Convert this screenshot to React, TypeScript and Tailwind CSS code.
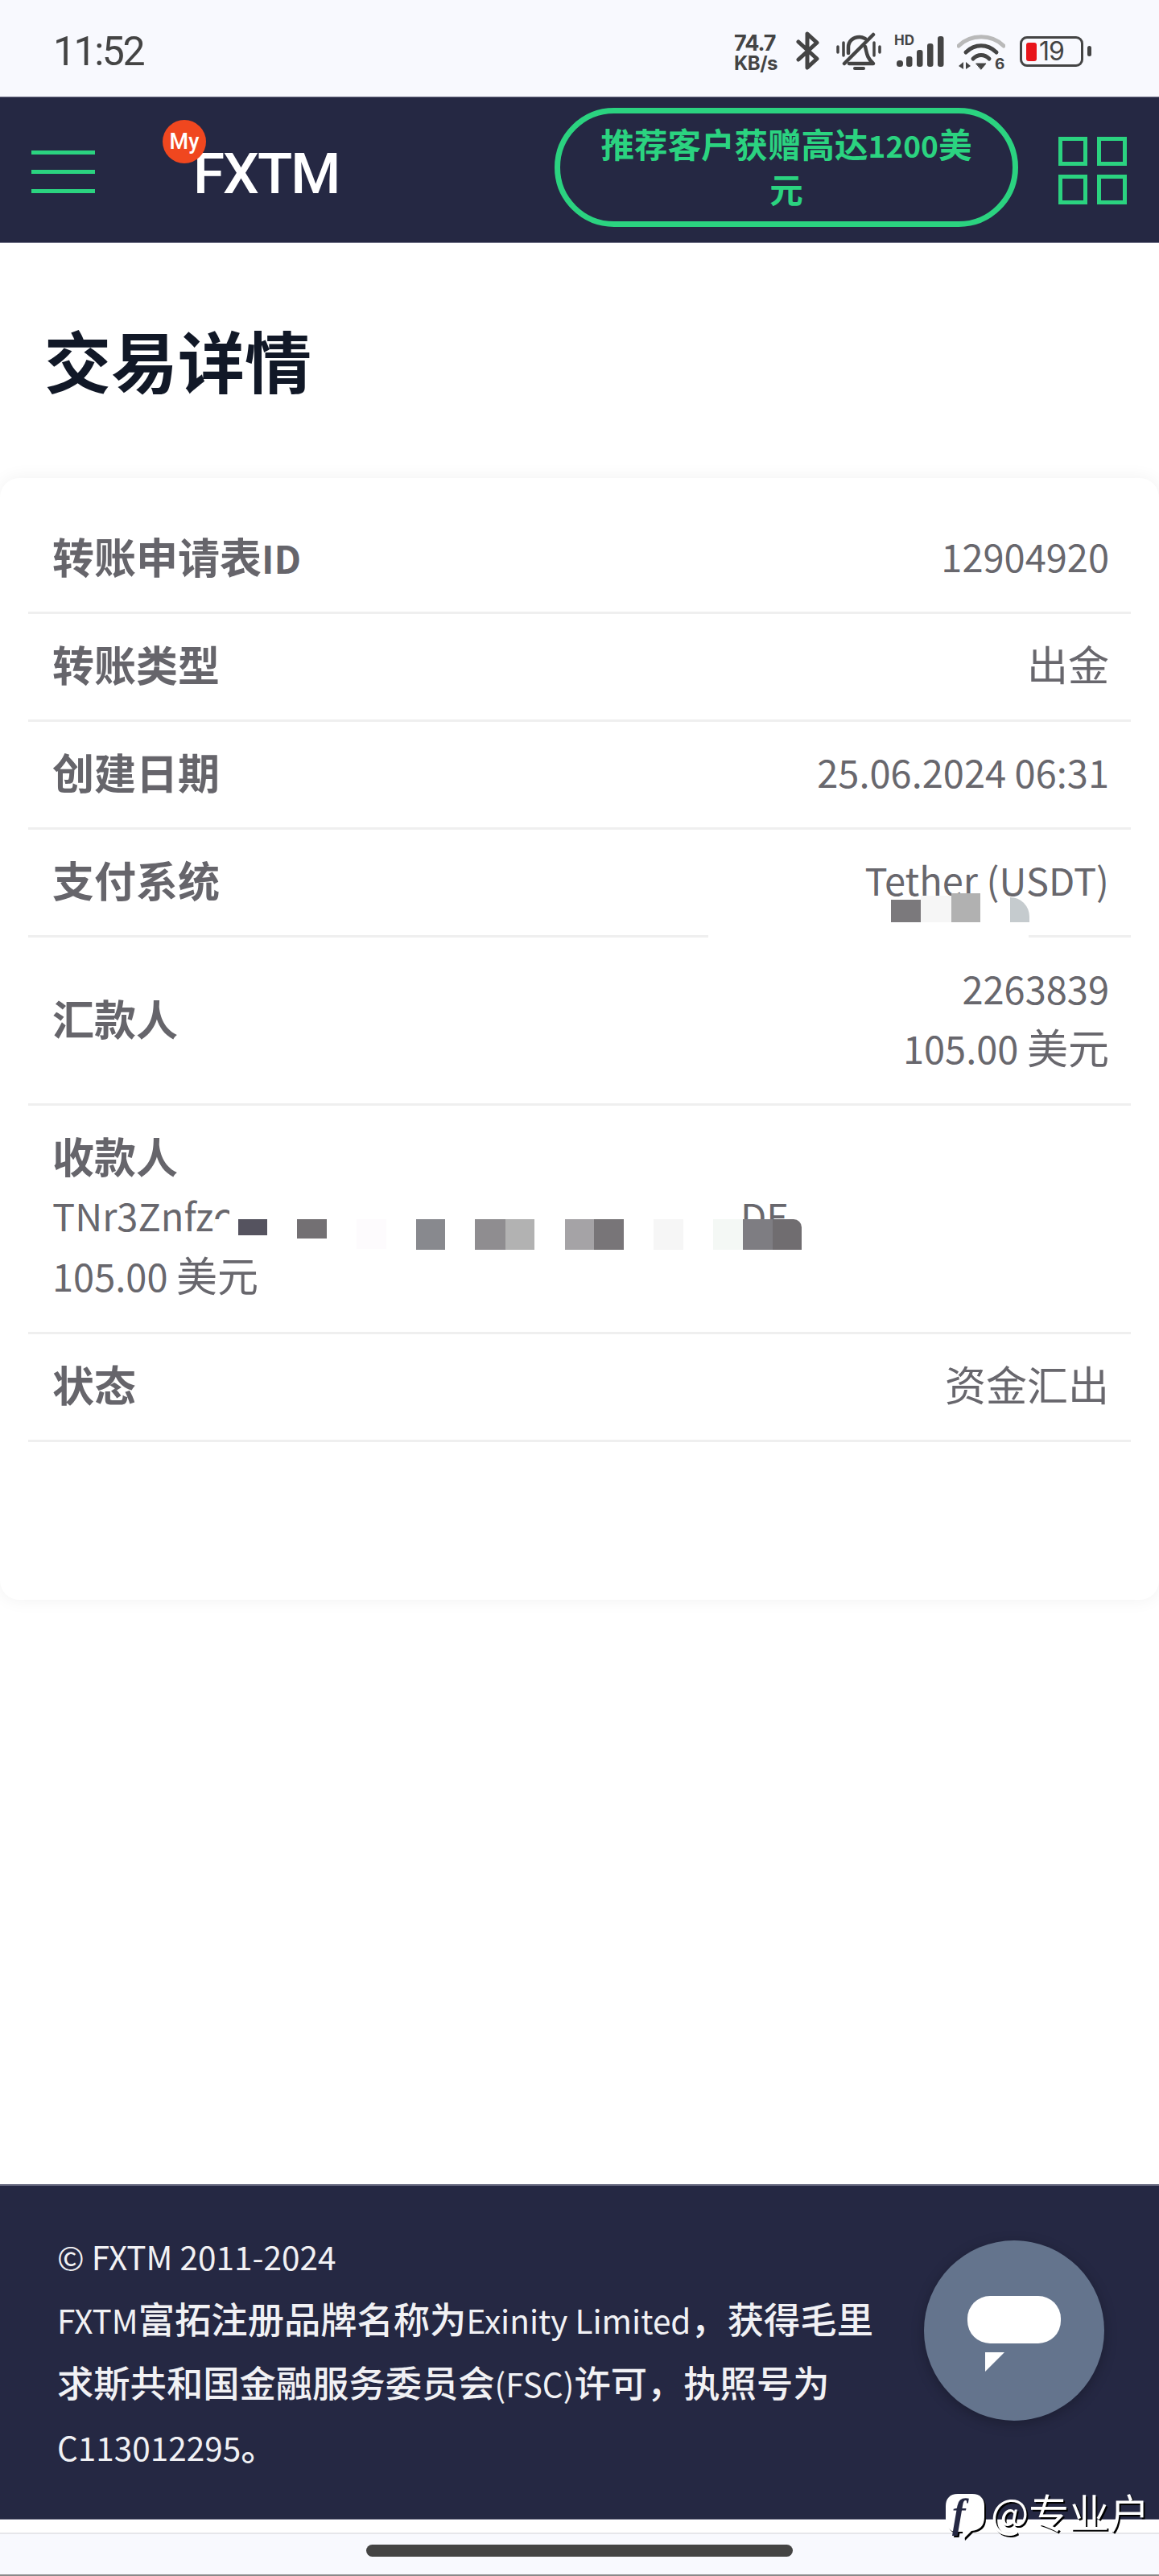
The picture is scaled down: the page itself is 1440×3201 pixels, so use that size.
const CJK = "font-['Noto_Sans_CJK_SC','Noto_Sans',sans-serif]";

function StatusIcons() {
  return (
    <div className="flex items-start">
      <div className="mt-[41px] w-[64px] font-['Inter',sans-serif] font-bold text-[#444444]">
        <div className="text-[27px] leading-[26px] tracking-[-1px]">74.7</div>
        <div className="text-[24px] leading-[23px] tracking-[-0.5px]">KB/s</div>
      </div>
      <svg className="mt-[39px] ml-[13px]" width="30" height="48" viewBox="0 0 30 48" fill="none" stroke="#444" strokeWidth="5" strokeLinejoin="round" strokeLinecap="round">
        <path d="M3 13 L26 34 L14 45 V3 L26 14 L3 35" />
      </svg>
      <svg className="mt-[40px] ml-[20px]" width="56" height="48" viewBox="0 0 56 48" fill="none" stroke="#444" strokeWidth="4.5" strokeLinecap="round" strokeLinejoin="round">
        <path d="M2 18 V25 M9 13 V29 M47 13 V29 M54 18 V25" strokeWidth="3.5" />
        <path d="M10 39 L46 3" strokeWidth="4.5" />
        <path d="M15 26 V19 C15 11 21 6 29 6 C32 6 34 7 36 8" />
        <path d="M36 18 C38 26 38 32 46 39 H16" />
        <path d="M23 45 H34" strokeWidth="4" />
      </svg>
      <div className="relative mt-[43px] ml-[16px] w-[66px] h-[42px]">
        <span className="absolute left-0 top-[-1px] font-['Inter',sans-serif] font-bold text-[17px] leading-[16px] text-[#444444]">HD</span>
        <svg className="absolute left-0 top-0" width="66" height="42" viewBox="0 0 66 42" fill="#444">
          <rect x="3" y="32" width="8" height="8" rx="3.5" />
          <rect x="15" y="27" width="7.5" height="13" rx="3" />
          <rect x="28" y="19" width="7.5" height="21" rx="3" />
          <rect x="41" y="11" width="7.5" height="29" rx="3" />
          <rect x="54" y="2" width="7.5" height="38" rx="3" />
        </svg>
      </div>
      <div className="relative mt-[43px] ml-[12px] w-[60px] h-[48px]">
        <svg className="absolute left-0 top-0" width="60" height="45" viewBox="0 0 60 45" fill="none" strokeLinecap="round">
          <path d="M2 14 C17 -1 43 -1 58 14" stroke="#b9b9b9" strokeWidth="5" />
          <path d="M11 22 C22 11 38 11 49 22" stroke="#444" strokeWidth="5" />
          <path d="M20 30 C26 24 34 24 40 30" stroke="#444" strokeWidth="5" />
          <path d="M24 36 L36 36 L30 43 Z" fill="#444" stroke="#444" strokeWidth="1" strokeLinejoin="round" />
          <path d="M2 39 L8 34 V43 Z M11 34 L17 39 L11 43 Z" fill="#444" />
        </svg>
        <span className="absolute left-[47px] top-[26px] font-['Inter',sans-serif] text-[19px] leading-[22px] font-bold text-[#444444]">6</span>
      </div>
      <div className="relative mt-[45px] ml-[18px] w-[79px] h-[38px] border-[3.5px] border-[#444444] rounded-[9px] flex items-center">
        <div className="ml-[5px] w-[13px] h-[23px] bg-[#e8141b] rounded-[3px]" />
        <span className="ml-[3px] font-['Inter',sans-serif] text-[32px] leading-[32px] text-[#444444] tracking-[-1px]">19</span>
      </div>
      <div className="mt-[57px] ml-[5px] w-[5px] h-[13px] rounded-full bg-[#444444]" />
    </div>
  );
}

/* Latin runs stay at the inherited size; CJK runs get the class given by the caller */
function Mixed({ text, cjk }: { text: string; cjk: string }) {
  return (
    <>
      {text.split(/([\u3000-\u303f\u4e00-\u9fff\uff00-\uffef]+)/).map((part, i) =>
        i % 2 === 1 ? (
          <span key={i} className={cjk}>
            {part}
          </span>
        ) : (
          part
        ),
      )}
    </>
  );
}

function Row({ label, values, children }: { label: string; values?: string[]; children?: React.ReactNode }) {
  const multi = values && values.length > 1;
  return (
    <div className={`relative flex shrink-0 items-center justify-between pl-[30px] pr-[27px] pb-[8px] border-b-[3px] border-[#efefef] ${multi ? "h-[209px]" : "h-[134px]"}`}>
      <div className="h-[71px] text-[47px] leading-[71px] font-bold text-[#66656b]">
        <Mixed text={label} cjk="text-[52px]" />
      </div>
      {values && (
        <div className="text-right text-[#68676d] text-[47px] leading-[73px]">
          {values.map((v) => (
            <div key={v} className="h-[73px]">
              <Mixed text={v} cjk="text-[51px]" />
            </div>
          ))}
        </div>
      )}
      {children}
    </div>
  );
}

const addressCells: [string, string, string][] = [
  ["left-[261px]", "w-[36px] h-[20px]", "bg-[#55535f]"],
  ["left-[334px]", "w-[37px] h-[24px]", "bg-[#737073]"],
  ["left-[408px]", "w-[37px] h-[37px]", "bg-[#fdfbfd]"],
  ["left-[482px]", "w-[36px] h-[38px]", "bg-[#88898e]"],
  ["left-[555px]", "w-[38px] h-[38px]", "bg-[#8f8d90]"],
  ["left-[593px]", "w-[36px] h-[38px]", "bg-[#b2b2b2]"],
  ["left-[667px]", "w-[36px] h-[38px]", "bg-[#a5a3a6]"],
  ["left-[703px]", "w-[37px] h-[38px]", "bg-[#787578]"],
  ["left-[777px]", "w-[37px] h-[38px]", "bg-[#f6f6f6]"],
  ["left-[851px]", "w-[37px] h-[38px]", "bg-[#f4f8f5]"],
  ["left-[888px]", "w-[37px] h-[38px]", "bg-[#7e7d82]"],
  ["left-[925px]", "w-[36px] h-[38px] rounded-tr-[10px]", "bg-[#706d70]"],
];

export default function App() {
  return (
    <div className={`${CJK} relative flex h-[3201px] w-[1440px] flex-col overflow-hidden bg-white`}>
      {/* status bar */}
      <div className="flex h-[120px] shrink-0 justify-between bg-[#f8f9fe] pl-[66px] pr-[84px]">
        <div className="mt-[32px] font-['Roboto',sans-serif] text-[50px] leading-[64px] tracking-[-2.5px] text-[#444444]">11:52</div>
        <StatusIcons />
      </div>

      {/* header */}
      <header className="relative flex h-[182px] shrink-0 items-center border-y border-[#73758a] bg-[#252843] pl-[39px] pr-[40px]">
        <div className="flex w-[79px] flex-col gap-[19px] mt-[5px]">
          <div className="h-[5px] bg-[#2bd380]" />
          <div className="h-[5px] bg-[#2bd380]" />
          <div className="h-[5px] bg-[#2bd380]" />
        </div>
        <div className="relative ml-[124px] h-[80px] w-[180px] mt-[14px]">
          <span className="absolute left-[-2px] top-[-4px] font-['Roboto',sans-serif] text-[71px] leading-[84px] font-medium tracking-[-2px] text-white">FXTM</span>
          <div className="absolute left-[-40px] top-[-29px] flex h-[54px] w-[54px] items-center justify-center rounded-full bg-[#f0471f] font-['Roboto',sans-serif] text-[27px] font-medium text-white">My</div>
        </div>
        <div className="ml-[267px] mt-[-6px] flex h-[148px] w-[576px] items-center justify-center rounded-full border-[7px] border-[#2bd380] px-[38px] pb-[2px] text-center text-[37px] leading-[54px] font-bold text-[#2bd380]">
          <span>
            <Mixed text="推荐客户获赠高达1200美元" cjk="text-[41.5px]" />
          </span>
        </div>
        <div className="ml-[50px] grid grid-cols-2 gap-x-[11px] gap-y-[11px] mt-[2px]">
          <div className="h-[36px] w-[36px] border-[5px] border-[#2bd380]" />
          <div className="h-[36px] w-[37px] border-[5px] border-[#2bd380]" />
          <div className="h-[37px] w-[36px] border-[5px] border-[#2bd380]" />
          <div className="h-[37px] w-[37px] border-[5px] border-[#2bd380]" />
        </div>
      </header>

      {/* title */}
      <h1 className="mt-[91px] ml-[55px] h-[201px] text-[83px] leading-[106px] font-bold text-[#111827]">交易详情</h1>

      {/* card */}
      <section className="flex h-[1394px] shrink-0 flex-col rounded-[24px] bg-white px-[35px] pt-[35px] shadow-[0_0_22px_rgba(0,0,0,0.06)]">
        <Row label="转账申请表ID" values={["12904920"]} />
        <Row label="转账类型" values={["出金"]} />
        <Row label="创建日期" values={["25.06.2024 06:31"]} />
        <Row label="支付系统" values={["Tether (USDT)"]}>
          <div className="absolute bottom-[-8px] left-[845px] h-[26px] w-[398px] bg-white" />
          <div className="absolute bottom-[16px] left-[1072px] h-[28px] w-[37px] bg-[#7b797c]" />
          <div className="absolute bottom-[16px] left-[1109px] h-[33px] w-[38px] bg-[#f6f6f6]" />
          <div className="absolute bottom-[16px] left-[1147px] h-[36px] w-[36px] bg-[#b1b1b1]" />
          <div className="absolute bottom-[16px] left-[1220px] h-[31px] w-[24px] rounded-tr-[24px] bg-[#c5cbce]" />
        </Row>
        <Row label="汇款人" values={["2263839", "105.00 美元"]} />
        <div className="relative h-[284px] shrink-0 border-b-[3px] border-[#efefef] px-[30px] pt-[25px]">
          <div className="h-[74px] text-[52px] leading-[74px] font-bold text-[#66656b]">收款人</div>
          <div className="h-[74px] text-[47px] leading-[74px] text-[#68676d]">TNr3Znfzc</div>
          <div className="h-[73px] text-[47px] leading-[73px] text-[#68676d]">
            <Mixed text="105.00 美元" cjk="text-[51px]" />
          </div>
          <span className="absolute left-[885px] top-[99px] text-[47px] leading-[74px] text-[#68676d]">DE</span>
          <div className="absolute left-[232px] top-[141px] h-[38px] w-[729px] bg-white" />
          <div className="absolute left-[250px] top-[100px] h-[41px] w-[600px] bg-white" />
          {addressCells.map(([pos, size, color]) => (
            <div key={pos} className={`absolute top-[141px] ${pos} ${size} ${color}`} />
          ))}
        </div>
        <Row label="状态" values={["资金汇出"]} />
      </section>

      <div className="flex-1" />

      {/* footer */}
      <footer className="relative h-[416px] shrink-0 border-t-2 border-[#73758a] bg-[#252843] pl-[71px] pt-[50px] text-[40.5px] leading-[76px] text-[#f1f1f4]">
        <div>© FXTM 2011-2024</div>
        <div className="w-[1040px]">
          <Mixed text="FXTM富拓注册品牌名称为Exinity Limited，获得毛里求斯共和国金融服务委员会(FSC)许可，执照号为C113012295。" cjk="text-[45.3px] font-medium" />
        </div>
        <div className="absolute left-[1148px] top-[68px] flex h-[224px] w-[224px] items-center justify-center rounded-full bg-[#64748d] shadow-[0_4px_16px_rgba(0,0,0,0.25)]">
          <div className="relative mb-[28px] h-[59px] w-[116px] rounded-[28px] bg-white">
            <svg className="absolute left-[22px] top-[70px]" width="24" height="24" viewBox="0 0 24 24" fill="#fff">
              <path d="M0 0 H24 L0 24 Z" />
            </svg>
          </div>
        </div>
      </footer>

      <div className="h-[17px] shrink-0 border-t border-[#73758a] bg-white" />
      <div className="flex h-[54px] shrink-0 items-start justify-center border-t-2 border-b-2 border-t-[#e6e6ea] border-b-[#8a8a8a] bg-[#f8f9fe] pt-[13px]">
        <div className="h-[15px] w-[530px] rounded-full bg-[#444444]" />
      </div>

      {/* watermark */}
      <div className="absolute left-[1174px] top-[3098px] flex items-start">
        <div className="relative h-[58px] w-[50px] [filter:drop-shadow(2px_2px_0_#000)]">
          <svg className="absolute left-0 top-0" width="50" height="58" viewBox="0 0 50 58">
            <path d="M16 1 H34 C44 1 49 7 49 16 V30 C49 41 43 46 33 47 L23 57 L22 48 H14 C6 48 1 42 1 32 V16 C1 7 6 1 16 1 Z" fill="#fff" />
          </svg>
          <span className="absolute left-[9px] top-[-3px] font-['Liberation_Serif',serif] text-[50px] leading-[56px] font-bold italic text-[#252843]">f</span>
        </div>
        <span className="ml-[7px] mt-[-8px] text-[50px] leading-[60px] text-white [text-shadow:2px_2px_0_#000]">@专业户</span>
      </div>
    </div>
  );
}
